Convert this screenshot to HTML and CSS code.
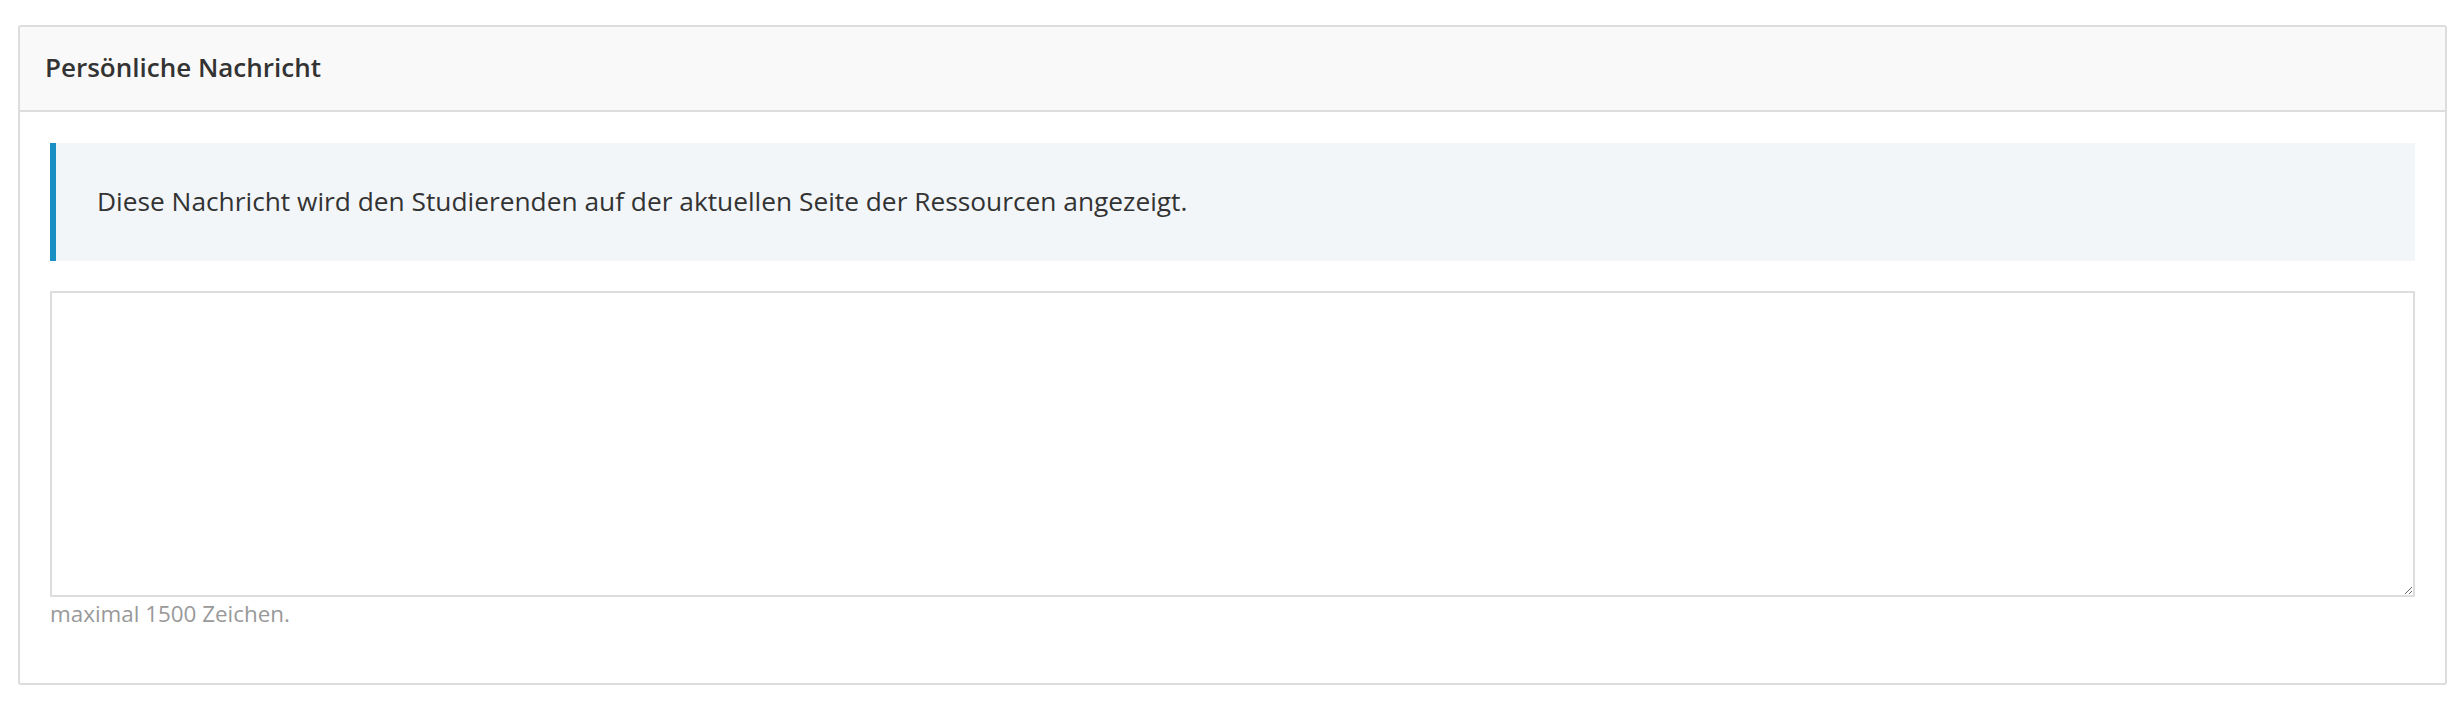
FILE: index.html
```html
<!DOCTYPE html>
<html lang="de">
<head>
<meta charset="utf-8">
<title>Persönliche Nachricht</title>
<link rel="stylesheet" href="styles.css">
</head>
<body>
<div class="panel">
  <div class="panel-heading">Persönliche Nachricht</div>
  <div class="panel-body">
    <div class="alert">Diese Nachricht wird den Studierenden auf der aktuellen Seite der Ressourcen angezeigt.</div>
    <textarea class="message" aria-label="Persönliche Nachricht"></textarea>
    <p class="help">maximal 1500 Zeichen.</p>
  </div>
</div>
</body>
</html>
```
FILE: styles.css
```css
html, body {
  margin: 0;
  background: #ffffff;
}
body {
  padding: 25px 15px 0 18px;
  font-family: "Open Sans", "Liberation Sans", sans-serif;
  color: #333333;
}
.panel {
  border: 2px solid #dddddd;
  border-radius: 3px;
  background: #ffffff;
}
.panel-heading {
  height: 85px;
  box-sizing: border-box;
  padding: 0 25px 4px 25px;
  display: flex;
  align-items: center;
  background: #f9f9f9;
  border-bottom: 2px solid #dddddd;
  font-size: 26px;
  font-weight: 600;
  color: #333333;
  border-radius: 2px 2px 0 0;
}
.panel-body {
  padding: 31px 30px 53px 30px;
  display: flex;
  flex-direction: column;
}
.alert {
  height: 118px;
  box-sizing: border-box;
  display: flex;
  align-items: center;
  padding: 0 0 3px 41px;
  border-left: 6px solid #1a8fc4;
  background: #f2f6f9;
  font-size: 26.3px;
  color: #333333;
}
.message {
  margin-top: 30px;
  height: 306px;
  box-sizing: border-box;
  border: 2px solid #dddddd;
  border-radius: 0;
  padding: 9px 18px;
  font-family: inherit;
  font-size: 24px;
  resize: vertical;
  outline: none;
}
.help {
  margin: 1px 0 0 0;
  font-size: 22.4px;
  line-height: 32px;
  color: #999999;
}
```
